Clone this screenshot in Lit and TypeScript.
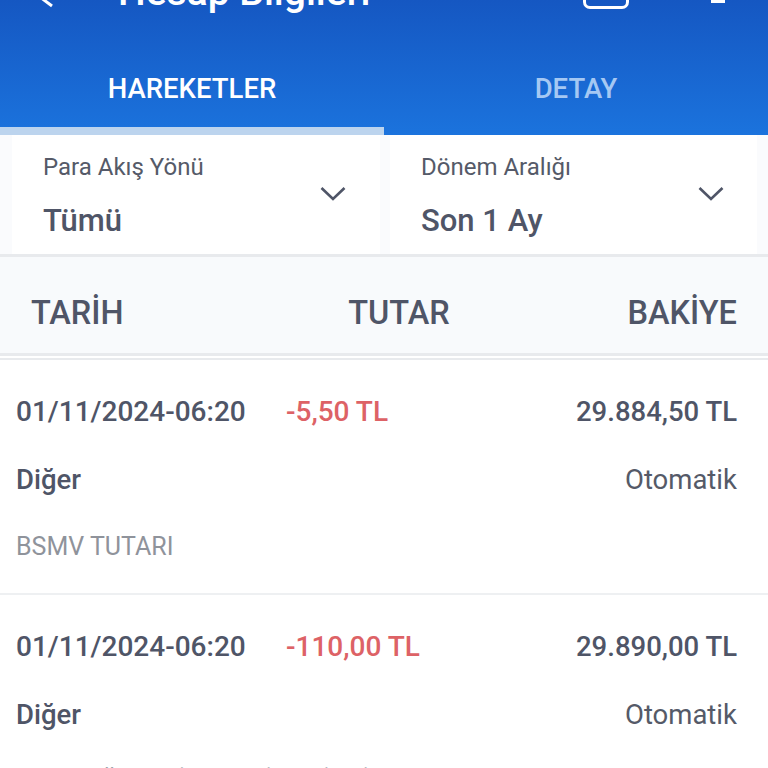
import { LitElement, html, css } from "lit";
import { customElement } from "lit/decorators.js";

const filters = [
  { label: "Para Akış Yönü", value: "Tümü" },
  { label: "Dönem Aralığı", value: "Son 1 Ay" }
];

const rows = [
  { date: "01/11/2024-06:20", amount: "-5,50 TL", balance: "29.884,50 TL", note: "BSMV TUTARI" },
  { date: "01/11/2024-06:20", amount: "-110,00 TL", balance: "29.890,00 TL", note: "HESAP ÜCRETİ BEDELİ KESİNTİ" }
];

@customElement("app-root")
export class AppRoot extends LitElement {
  static styles = css`
    :host {
      display: block;
      height: 768px;
      overflow: hidden;
      background: #fff;
      font-family: Roboto, "Noto Sans", sans-serif;
      color: #4f5567;
    }
    .header {
      height: 135px;
      background: linear-gradient(180deg, #1557c2 0%, #1b73dd 100%);
      overflow: hidden;
      display: flex;
      flex-direction: column;
    }
    .topbar {
      flex: 0 0 auto;
      height: 56px;
      margin-top: -36px;
      display: flex;
      align-items: center;
      color: #fff;
    }
    .back {
      width: 24px;
      height: 34px;
      margin-left: 30px;
    }
    .title {
      margin-left: 64px;
      font-size: 39px;
      font-weight: 500;
      white-space: nowrap;
      flex: 1;
    }
    .box {
      width: 46px;
      height: 34px;
      margin-right: 82px;
      box-sizing: border-box;
      border: 3px solid #fff;
      border-radius: 7px;
    }
    .dots {
      width: 14px;
      height: 22px;
      margin-right: 43px;
      display: flex;
      flex-direction: column;
      justify-content: flex-end;
    }
    .dots i {
      display: block;
      height: 5px;
      background: #fff;
    }
    .tabs {
      flex: 1;
      display: grid;
      grid-template-columns: 1fr 1fr;
      margin-top: 33px;
    }
    .tab {
      display: flex;
      align-items: center;
      justify-content: center;
      padding-bottom: 12px;
      font-size: 27.5px;
      font-weight: 500;
      color: #a5c8f3;
    }
    .tab.on {
      color: #fff;
      border-bottom: 8px solid #bcd4ee;
      padding-bottom: 4px;
    }
    .filters {
      height: 122px;
      box-sizing: border-box;
      display: grid;
      grid-template-columns: 384px 384px;
      background: #fafbfd;
      border-bottom: 3px solid #e8eaed;
    }
    .filter {
      background: #fff;
      margin-left: 12px;
      width: 368px;
      box-sizing: border-box;
      padding: 17px 31px 0;
      position: relative;
    }
    .filter + .filter {
      margin-left: 6px;
      width: 367px;
    }
    .filter-label {
      font-size: 24px;
      line-height: 30px;
      color: #555a68;
    }
    .filter-value {
      margin-top: 20px;
      font-size: 31px;
      line-height: 38px;
      font-weight: 500;
    }
    .chevron {
      position: absolute;
      right: 34px;
      top: 51px;
      width: 26px;
      height: 16px;
    }
    .filter + .filter .chevron {
      right: 33px;
    }
    .thead {
      height: 99px;
      background: #f8fafc;
      border-bottom: 3px solid #e8eaed;
      box-sizing: border-box;
      display: grid;
      grid-template-columns: 1fr 1fr 1fr;
      align-items: center;
      padding: 16px 31px 0;
      font-size: 32.5px;
      font-weight: 500;
    }
    .thead span:nth-child(2) {
      text-align: center;
      padding-left: 30px;
    }
    .thead span:nth-child(3) {
      text-align: right;
    }
    .gap {
      height: 2px;
      background: #fff;
      border-bottom: 2px solid #e8eaed;
    }
    .row {
      height: 235px;
      box-sizing: border-box;
      padding: 34px 31px 0 16px;
      border-bottom: 2px solid #eef0f2;
    }
    .line {
      display: flex;
      align-items: center;
      height: 34px;
    }
    .date {
      width: 270px;
      font-size: 28px;
      font-weight: 500;
    }
    .amount {
      flex: 1;
      font-size: 28px;
      font-weight: 500;
      color: #dd6266;
    }
    .balance {
      font-size: 27.5px;
      font-weight: 500;
    }
    .kind {
      flex: 1;
      font-size: 27.5px;
      font-weight: 500;
    }
    .channel {
      font-size: 27.5px;
      color: #555a68;
    }
    .second {
      margin-top: 34px;
    }
    .note {
      margin-top: 36px;
      font-size: 25px;
      color: #8f939b;
      white-space: nowrap;
    }
  `;

  render() {
    return html`
      <div class="header">
        <div class="topbar">
          <svg class="back" viewBox="0 0 24 34" fill="none" stroke="currentColor" stroke-width="3">
            <path d="M22 31 L6 19 L22 3" />
          </svg>
          <div class="title">Hesap Bilgileri</div>
          <div class="box"></div>
          <div class="dots"><i></i></div>
        </div>
        <div class="tabs">
          <div class="tab on">HAREKETLER</div>
          <div class="tab">DETAY</div>
        </div>
      </div>
      <div class="filters">
        ${filters.map(
          (f) => html`
            <div class="filter">
              <div class="filter-label">${f.label}</div>
              <div class="filter-value">${f.value}</div>
              <svg class="chevron" viewBox="0 0 26 16" fill="none" stroke="#4f5567" stroke-width="2.6">
                <path d="M1.5 2 L13 13 L24.5 2" />
              </svg>
            </div>
          `
        )}
      </div>
      <div class="thead">
        <span>TARİH</span><span>TUTAR</span><span>BAKİYE</span>
      </div>
      <div class="gap"></div>
      ${rows.map(
        (r) => html`
          <div class="row">
            <div class="line">
              <span class="date">${r.date}</span>
              <span class="amount">${r.amount}</span>
              <span class="balance">${r.balance}</span>
            </div>
            <div class="line second">
              <span class="kind">Diğer</span>
              <span class="channel">Otomatik</span>
            </div>
            <div class="note">${r.note}</div>
          </div>
        `
      )}
    `;
  }
}
